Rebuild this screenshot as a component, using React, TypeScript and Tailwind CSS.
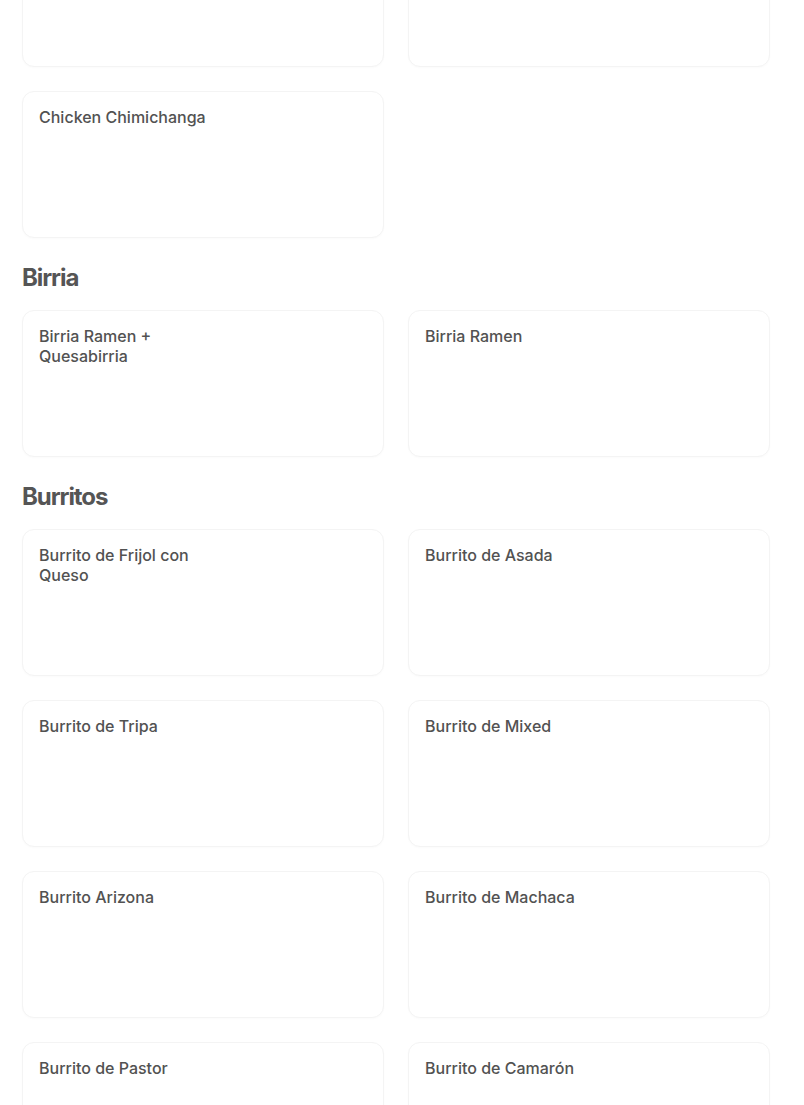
import React from "react";

type Section = { title?: string; items: string[] };

const sections: Section[] = [
  { items: ["", "", "Chicken Chimichanga"] },
  { title: "Birria", items: ["Birria Ramen + Quesabirria", "Birria Ramen"] },
  {
    title: "Burritos",
    items: [
      "Burrito de Frijol con Queso",
      "Burrito de Asada",
      "Burrito de Tripa",
      "Burrito de Mixed",
      "Burrito Arizona",
      "Burrito de Machaca",
      "Burrito de Pastor",
      "Burrito de Camarón",
    ],
  },
];

function Card({ name }: { name: string }) {
  return (
    <div className="h-[147px] rounded-xl border border-[#f4f4f4] bg-white px-4 pt-[15px] shadow-[0_1px_2px_rgba(0,0,0,0.02)]">
      <div className="max-w-[200px] text-[16px] leading-5 font-[450] text-[#525252]">{name}</div>
    </div>
  );
}

export default function App() {
  return (
    <div
      className="h-[1105px] overflow-hidden bg-white"
      style={{ fontFamily: "Inter, 'Noto Sans', 'Liberation Sans', sans-serif" }}
    >
      <div className="-mt-[80px] pl-[22px] w-[793px]">
        {sections.map((s, i) => (
          <div key={i}>
            {s.title && (
              <h2 className="mt-[26px] mb-[18px] text-[24px] leading-7 font-bold tracking-[-0.045em] text-[#555555]">
                {s.title}
              </h2>
            )}
            <div className="grid grid-cols-[362px_362px] gap-x-[24px] gap-y-[24px]">
              {s.items.map((it, j) => (
                <Card key={j} name={it} />
              ))}
            </div>
          </div>
        ))}
      </div>
    </div>
  );
}
